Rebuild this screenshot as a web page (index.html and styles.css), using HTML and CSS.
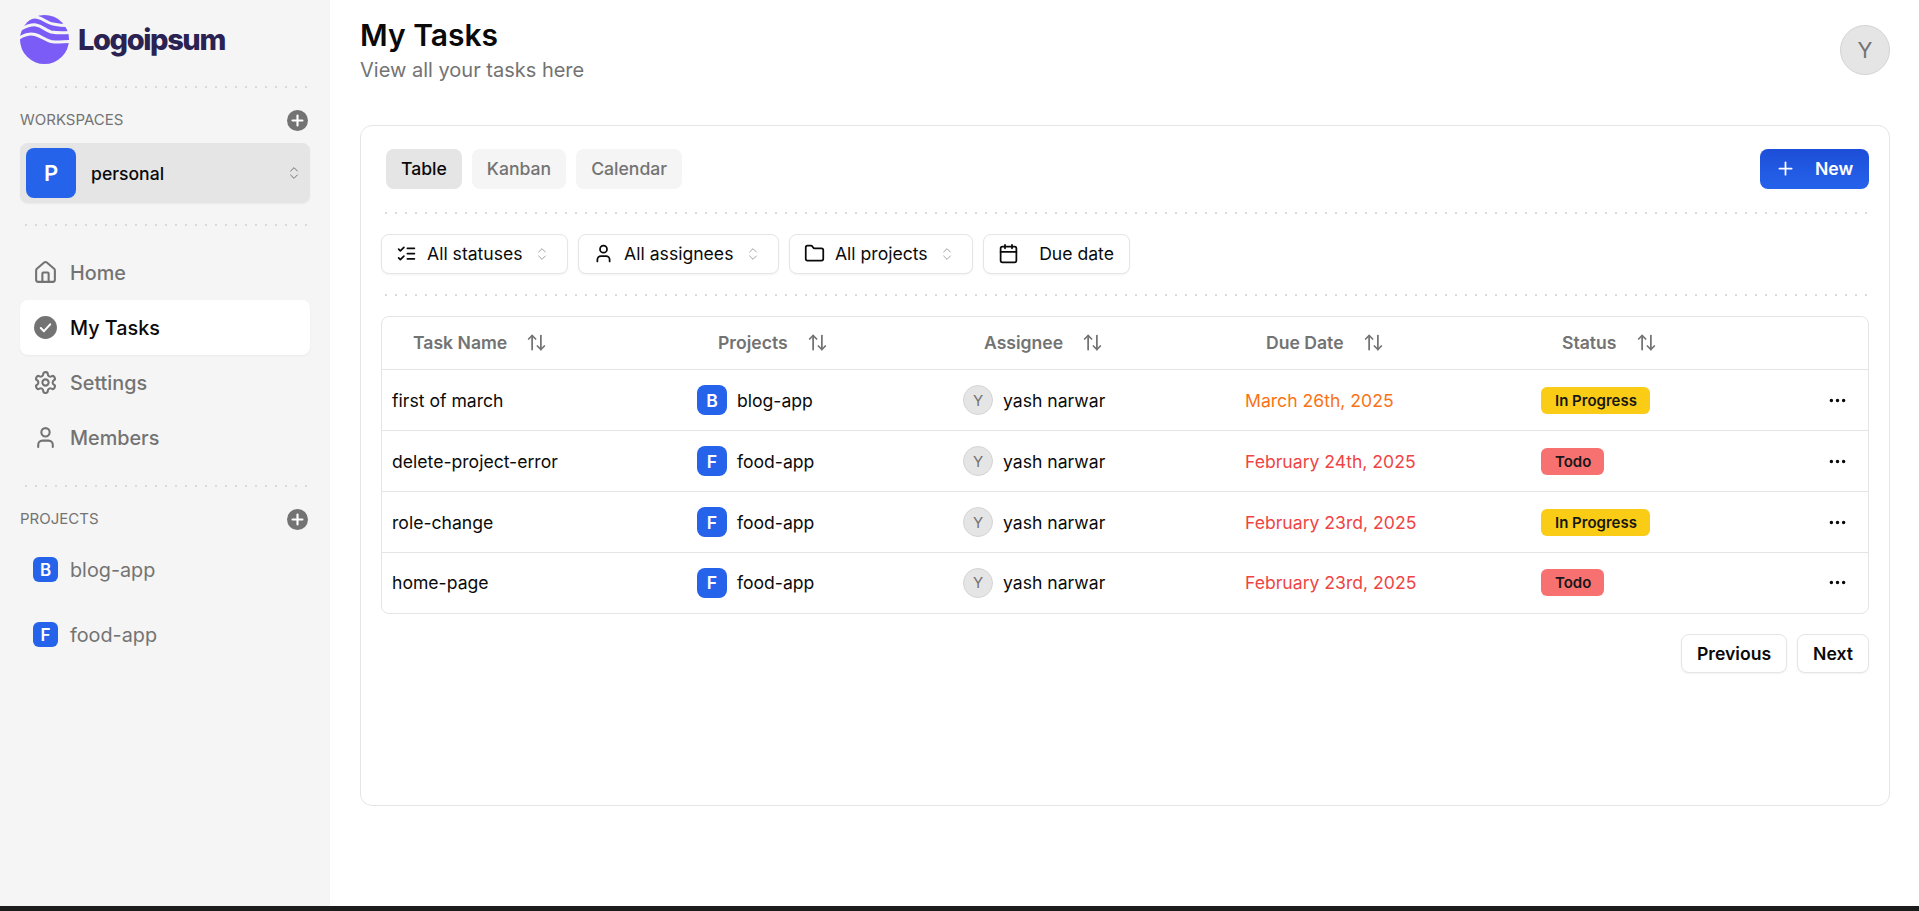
FILE: index.html
```html
<!DOCTYPE html>
<html lang="en">
<head>
    <meta charset="UTF-8">
    <title>My Tasks</title>
    <link rel="stylesheet" href="styles.css">
</head>
<body>
    <!-- icon sprite -->
    <svg class="sprite" aria-hidden="true">
        <symbol id="i-house" viewBox="0 0 24 24"><path d="M15 21v-8a1 1 0 0 0-1-1h-4a1 1 0 0 0-1 1v8"/><path d="M3 10a2 2 0 0 1 .709-1.528l7-5.999a2 2 0 0 1 2.582 0l7 5.999A2 2 0 0 1 21 10v9a2 2 0 0 1-2 2H5a2 2 0 0 1-2-2z"/></symbol>
        <symbol id="i-settings" viewBox="0 0 24 24"><path d="M12.22 2h-.44a2 2 0 0 0-2 2v.18a2 2 0 0 1-1 1.73l-.43.25a2 2 0 0 1-2 0l-.15-.08a2 2 0 0 0-2.73.73l-.22.38a2 2 0 0 0 .73 2.73l.15.1a2 2 0 0 1 1 1.72v.51a2 2 0 0 1-1 1.74l-.15.09a2 2 0 0 0-.73 2.73l.22.38a2 2 0 0 0 2.73.73l.15-.08a2 2 0 0 1 2 0l.43.25a2 2 0 0 1 1 1.73V20a2 2 0 0 0 2 2h.44a2 2 0 0 0 2-2v-.18a2 2 0 0 1 1-1.73l.43-.25a2 2 0 0 1 2 0l.15.08a2 2 0 0 0 2.73-.73l.22-.39a2 2 0 0 0-.73-2.73l-.15-.08a2 2 0 0 1-1-1.74v-.5a2 2 0 0 1 1-1.74l.15-.09a2 2 0 0 0 .73-2.73l-.22-.38a2 2 0 0 0-2.73-.73l-.15.08a2 2 0 0 1-2 0l-.43-.25a2 2 0 0 1-1-1.73V4a2 2 0 0 0-2-2z"/><circle cx="12" cy="12" r="3"/></symbol>
        <symbol id="i-user" viewBox="0 0 24 24"><path d="M19 21v-2a4 4 0 0 0-4-4H9a4 4 0 0 0-4 4v2"/><circle cx="12" cy="7" r="4"/></symbol>
        <symbol id="i-checks" viewBox="0 0 24 24"><path d="m3 17 2 2 4-4"/><path d="m3 7 2 2 4-4"/><path d="M13 6h8"/><path d="M13 12h8"/><path d="M13 18h8"/></symbol>
        <symbol id="i-folder" viewBox="0 0 24 24"><path d="M20 20a2 2 0 0 0 2-2V8a2 2 0 0 0-2-2h-7.9a2 2 0 0 1-1.69-.9L9.6 3.9A2 2 0 0 0 7.93 3H4a2 2 0 0 0-2 2v13a2 2 0 0 0 2 2Z"/></symbol>
        <symbol id="i-calendar" viewBox="0 0 24 24"><path d="M8 2v4"/><path d="M16 2v4"/><rect width="18" height="18" x="3" y="4" rx="2"/><path d="M3 10h18"/></symbol>
        <symbol id="i-updown" viewBox="0 0 24 24"><path d="m7 15 5 5 5-5"/><path d="m7 9 5-5 5 5"/></symbol>
        <symbol id="i-sort" viewBox="0 0 24 24"><path d="m21 16-4 4-4-4"/><path d="M17 20V4"/><path d="m3 8 4-4 4 4"/><path d="M7 4v16"/></symbol>
        <symbol id="i-plus" viewBox="0 0 24 24"><path d="M5 12h14"/><path d="M12 5v14"/></symbol>
        <symbol id="i-dots" viewBox="0 0 24 24"><circle cx="5" cy="12" r="1"/><circle cx="12" cy="12" r="1"/><circle cx="19" cy="12" r="1"/></symbol>
    </svg>

    <div class="app">
        <!-- sidebar -->
        <aside class="sidebar">
            <div class="logo">
                <svg class="logo-mark" viewBox="0 0 49 49">
                    <circle cx="24.5" cy="24.5" r="24.5" fill="#7c5cf6"/>
                    <g fill="none" stroke="#f5f5f5" stroke-width="3">
                        <path d="M2 8C8 4 12 1 18 2.500C24 4 27 8 33 9C38 10 44 11 50 10.500"/>
                        <path d="M-1 15C5 12 10 9 16 10C22 11 25 15 31 17C37 18 44 18 50 17.500"/>
                        <path d="M-1 23C4 20 9 18 15 19.500C21 21 25 25 31 26.500C37 27.500 44 27 50 26.500"/>
                    </g>
                </svg>
                <span class="logo-text">Logoipsum</span>
            </div>

            <div class="dots"></div>

            <div class="side-head">
                <span>WORKSPACES</span>
                <button class="add-btn"><svg class="icon"><use href="#i-plus"/></svg></button>
            </div>
            <div class="workspace">
                <span class="ws-tile">P</span>
                <span class="ws-name">personal</span>
                <svg class="icon ws-chevron"><use href="#i-updown"/></svg>
            </div>

            <div class="dots"></div>

            <nav class="side-nav">
                <a class="nav-item"><svg class="icon"><use href="#i-house"/></svg>Home</a>
                <a class="nav-item active">
                    <svg class="check-icon" viewBox="0 0 24 24">
                        <circle cx="12" cy="12" r="11" fill="#737373"/>
                        <path d="m7.500 12.500 3 3 6-6.500" fill="none" stroke="#fff" stroke-width="2" stroke-linecap="round" stroke-linejoin="round"/>
                    </svg>
                    My Tasks
                </a>
                <a class="nav-item"><svg class="icon"><use href="#i-settings"/></svg>Settings</a>
                <a class="nav-item"><svg class="icon"><use href="#i-user"/></svg>Members</a>
            </nav>

            <div class="dots"></div>

            <div class="side-head">
                <span>PROJECTS</span>
                <button class="add-btn"><svg class="icon"><use href="#i-plus"/></svg></button>
            </div>
            <div class="side-projects">
                <a class="project-item"><span class="tile tile-sm">B</span>blog-app</a>
                <a class="project-item"><span class="tile tile-sm">F</span>food-app</a>
            </div>
        </aside>

        <!-- main content -->
        <main class="main">
            <header class="page-head">
                <div>
                    <h1>My Tasks</h1>
                    <p>View all your tasks here</p>
                </div>
                <span class="avatar avatar-lg">Y</span>
            </header>

            <section class="card">
                <div class="toolbar">
                    <div class="tabs">
                        <button class="tab active">Table</button>
                        <button class="tab">Kanban</button>
                        <button class="tab">Calendar</button>
                    </div>
                    <button class="new-btn"><svg class="icon"><use href="#i-plus"/></svg>New</button>
                </div>

                <div class="dots"></div>

                <div class="filters">
                    <button class="filter"><svg class="icon"><use href="#i-checks"/></svg>All statuses<svg class="icon chev"><use href="#i-updown"/></svg></button>
                    <button class="filter"><svg class="icon"><use href="#i-user"/></svg>All assignees<svg class="icon chev"><use href="#i-updown"/></svg></button>
                    <button class="filter"><svg class="icon"><use href="#i-folder"/></svg>All projects<svg class="icon chev"><use href="#i-updown"/></svg></button>
                    <button class="filter filter-date"><svg class="icon"><use href="#i-calendar"/></svg>Due date</button>
                </div>

                <div class="dots"></div>

                <div class="table-wrap">
                    <table class="task-table">
                        <thead>
                            <tr>
                                <th class="col-name"><span class="th-in">Task Name<svg class="icon"><use href="#i-sort"/></svg></span></th>
                                <th class="col-project"><span class="th-in">Projects<svg class="icon"><use href="#i-sort"/></svg></span></th>
                                <th class="col-assignee"><span class="th-in">Assignee<svg class="icon"><use href="#i-sort"/></svg></span></th>
                                <th class="col-due"><span class="th-in">Due Date<svg class="icon"><use href="#i-sort"/></svg></span></th>
                                <th class="col-status"><span class="th-in">Status<svg class="icon"><use href="#i-sort"/></svg></span></th>
                                <th class="col-more"></th>
                            </tr>
                        </thead>
                        <tbody>
                            <tr>
                                <td>first of march</td>
                                <td><span class="cell-in"><span class="tile">B</span>blog-app</span></td>
                                <td><span class="cell-in"><span class="avatar">Y</span>yash narwar</span></td>
                                <td class="due-soon">March 26th, 2025</td>
                                <td><span class="badge badge-progress">In Progress</span></td>
                                <td class="more"><svg class="icon"><use href="#i-dots"/></svg></td>
                            </tr>
                            <tr>
                                <td>delete-project-error</td>
                                <td><span class="cell-in"><span class="tile">F</span>food-app</span></td>
                                <td><span class="cell-in"><span class="avatar">Y</span>yash narwar</span></td>
                                <td class="due-late">February 24th, 2025</td>
                                <td><span class="badge badge-todo">Todo</span></td>
                                <td class="more"><svg class="icon"><use href="#i-dots"/></svg></td>
                            </tr>
                            <tr>
                                <td>role-change</td>
                                <td><span class="cell-in"><span class="tile">F</span>food-app</span></td>
                                <td><span class="cell-in"><span class="avatar">Y</span>yash narwar</span></td>
                                <td class="due-late">February 23rd, 2025</td>
                                <td><span class="badge badge-progress">In Progress</span></td>
                                <td class="more"><svg class="icon"><use href="#i-dots"/></svg></td>
                            </tr>
                            <tr>
                                <td>home-page</td>
                                <td><span class="cell-in"><span class="tile">F</span>food-app</span></td>
                                <td><span class="cell-in"><span class="avatar">Y</span>yash narwar</span></td>
                                <td class="due-late">February 23rd, 2025</td>
                                <td><span class="badge badge-todo">Todo</span></td>
                                <td class="more"><svg class="icon"><use href="#i-dots"/></svg></td>
                            </tr>
                        </tbody>
                    </table>
                </div>

                <div class="pager">
                    <button class="page-btn">Previous</button>
                    <button class="page-btn">Next</button>
                </div>
            </section>
        </main>
    </div>

    <div class="bottom-bar"></div>
</body>
</html>
```

FILE: styles.css
```css
:root {
    --blue: #2563eb;
    --muted: #737373;
    --line: #e5e5e5;
    --side-bg: #f5f5f5;
    --ink: #0a0a0a;
}

* {
    box-sizing: border-box;
}

html, body {
    height: 100%;
}

body {
    margin: 0;
    font-family: "Inter", "Liberation Sans", sans-serif;
    font-size: 17.6px;
    color: var(--ink);
    background: #fff;
    display: flex;
    flex-direction: column;
    overflow: hidden;
}

button {
    font: inherit;
    color: inherit;
    border: none;
    background: none;
    padding: 0;
}

.sprite {
    display: none;
}

.icon {
    width: 21px;
    height: 21px;
    fill: none;
    stroke: currentColor;
    stroke-width: 2;
    stroke-linecap: round;
    stroke-linejoin: round;
    flex-shrink: 0;
}

.app {
    flex: 1;
    display: flex;
    min-height: 0;
}

.bottom-bar {
    height: 5px;
    background: #1c1c1c;
}

/* dotted separators */
.dots {
    height: 2px;
    margin: 0 3px 0 5px;
    background: repeating-linear-gradient(to right, #d9d9d9 0 2px, transparent 2px 10px);
}

.card .dots {
    margin: 0 2px 0 4px;
}

/* sidebar */
.sidebar {
    width: 330px;
    flex-shrink: 0;
    padding: 15px 20px 0;
    background: var(--side-bg);
}

.logo {
    display: flex;
    align-items: center;
    gap: 9px;
    height: 49px;
    margin-bottom: 22px;
}

.logo-mark {
    width: 49px;
    height: 49px;
}

.logo-text {
    font-size: 29px;
    font-weight: 800;
    letter-spacing: -1.4px;
    color: #2a2252;
}

.side-head {
    display: flex;
    align-items: center;
    justify-content: space-between;
    height: 21px;
    margin-top: 22px;
    padding-right: 2px;
    font-size: 15px;
    color: var(--muted);
}

.side-head span {
    padding-bottom: 2px;
}

.add-btn {
    width: 21px;
    height: 21px;
    display: flex;
    align-items: center;
    justify-content: center;
    border-radius: 50%;
    background: var(--muted);
    color: #fff;
}

.add-btn .icon {
    width: 17px;
    height: 17px;
    stroke-width: 3;
}

.workspace {
    display: flex;
    align-items: center;
    height: 60px;
    margin: 12px 0 21px;
    padding: 0 8px 0 6px;
    border-radius: 8px;
    background: var(--line);
    box-shadow: 0 1px 2px rgba(0,0,0,0.05);
}

.ws-tile {
    width: 50px;
    height: 50px;
    display: flex;
    align-items: center;
    justify-content: center;
    border-radius: 8px;
    background: var(--blue);
    color: #fff;
    font-size: 22px;
    font-weight: 600;
}

.ws-name {
    flex: 1;
    margin-left: 15px;
    font-weight: 500;
}

.ws-chevron {
    width: 16px;
    height: 16px;
    color: var(--muted);
    stroke-width: 1.500;
}

.side-nav {
    margin: 19px 0 20px;
}

.nav-item {
    display: flex;
    align-items: center;
    gap: 12px;
    height: 55px;
    padding-left: 13px;
    border-radius: 8px;
    font-size: 19.8px;
    font-weight: 500;
    color: var(--muted);
}

.nav-item .icon {
    width: 25px;
    height: 25px;
}

.nav-item.active {
    background: #fff;
    color: var(--ink);
    box-shadow: 0 1px 2px rgba(0,0,0,0.05);
}

.check-icon {
    width: 25px;
    height: 25px;
    flex-shrink: 0;
}

.side-projects {
    margin-top: 7px;
}

.project-item {
    display: flex;
    align-items: center;
    gap: 12px;
    height: 65px;
    padding-left: 13px;
    font-size: 19.8px;
    color: var(--muted);
}

/* letter tiles and avatars */
.tile {
    width: 30px;
    height: 30px;
    display: inline-flex;
    align-items: center;
    justify-content: center;
    flex-shrink: 0;
    border-radius: 8px;
    background: var(--blue);
    color: #fff;
    font-weight: 600;
}

.tile-sm {
    width: 25px;
    height: 25px;
    border-radius: 6px;
    font-size: 17px;
}

.avatar {
    width: 30px;
    height: 30px;
    display: inline-flex;
    align-items: center;
    justify-content: center;
    flex-shrink: 0;
    border-radius: 50%;
    border: 1px solid #d4d4d4;
    background: var(--line);
    color: var(--muted);
    font-size: 15px;
}

.avatar-lg {
    width: 50px;
    height: 50px;
    font-size: 22px;
}

/* main */
.main {
    flex: 1;
    min-width: 0;
    padding: 0 29px 0 30px;
}

.page-head {
    display: flex;
    align-items: flex-start;
    justify-content: space-between;
    height: 125px;
    padding-top: 17px;
}

.page-head .avatar-lg {
    margin-top: 8px;
}

.page-head h1 {
    margin: 0;
    font-size: 30px;
    font-weight: 600;
    line-height: 36px;
}

.page-head p {
    margin: 3px 0 0;
    font-size: 20px;
    line-height: 28px;
    color: var(--muted);
}

.card {
    height: 681px;
    padding: 23px 20px 0;
    border: 1px solid var(--line);
    border-radius: 12px;
}

.toolbar {
    display: flex;
    align-items: flex-start;
    justify-content: space-between;
    height: 40px;
    margin-bottom: 23px;
    padding-left: 5px;
}

.tabs {
    display: flex;
    gap: 10px;
}

.tab {
    height: 39.6px;
    padding: 0 15px;
    border-radius: 8px;
    background: var(--side-bg);
    font-weight: 500;
    color: var(--muted);
}

.tab.active {
    background: var(--line);
    color: var(--ink);
}

.new-btn {
    display: flex;
    align-items: center;
    gap: 19px;
    width: 109px;
    height: 39.6px;
    padding-left: 15px;
    border-radius: 8px;
    background: linear-gradient(to bottom, #1d4ed8, #2563eb);
    color: #fff;
    font-weight: 600;
}

.filters {
    display: flex;
    gap: 10px;
    margin: 20px 0;
}

.filter {
    display: flex;
    align-items: center;
    gap: 10px;
    height: 39.6px;
    padding: 0 17px 0 14px;
    border: 1px solid var(--line);
    border-radius: 8px;
    background: #fff;
    box-shadow: 0 1px 2px rgba(0,0,0,0.05);
    white-space: nowrap;
}

.filter-date {
    gap: 20px;
    padding-right: 15px;
}

.filter .chev {
    width: 16px;
    height: 16px;
    margin-left: 1.500px;
    color: #a3a3a3;
    stroke-width: 1.500;
}

/* task table */
.table-wrap {
    margin-top: 20px;
    border: 1px solid var(--line);
    border-radius: 8px;
    overflow: hidden;
}

.task-table {
    width: 100%;
    border-collapse: collapse;
    table-layout: fixed;
}

.col-name { width: 305px; }
.col-project { width: 266px; }
.col-assignee { width: 282px; }
.col-due { width: 296px; }
.col-more { width: 58px; }

.task-table th {
    height: 53px;
    padding: 0 0 0 31px;
    border-bottom: 1px solid var(--line);
    text-align: left;
    font-weight: 600;
    color: var(--muted);
}

.th-in {
    display: inline-flex;
    align-items: center;
    gap: 19px;
}

.task-table td {
    height: 61px;
    padding: 0 10px;
    border-bottom: 1px solid var(--line);
}

.task-table tbody tr:last-child td {
    height: 60px;
    border-bottom: none;
}

.cell-in {
    display: flex;
    align-items: center;
    gap: 10px;
}

.due-soon { color: #f97316; }
.due-late { color: #ef4444; }

.badge {
    display: inline-block;
    padding: 0 13px 0 14px;
    border-radius: 6px;
    font-size: 15px;
    font-weight: 600;
    line-height: 27px;
    color: #171717;
}

.badge-progress { background: #facc15; }
.badge-todo { background: #f87171; }

.task-table td.more {
    padding: 0 20px 0 0;
    text-align: right;
    line-height: 0;
}

.pager {
    display: flex;
    justify-content: flex-end;
    gap: 10px;
    margin-top: 20px;
}

.page-btn {
    height: 39.6px;
    padding: 0 15px;
    border: 1px solid var(--line);
    border-radius: 8px;
    background: #fff;
    box-shadow: 0 1px 2px rgba(0,0,0,0.05);
    font-weight: 600;
}
```
